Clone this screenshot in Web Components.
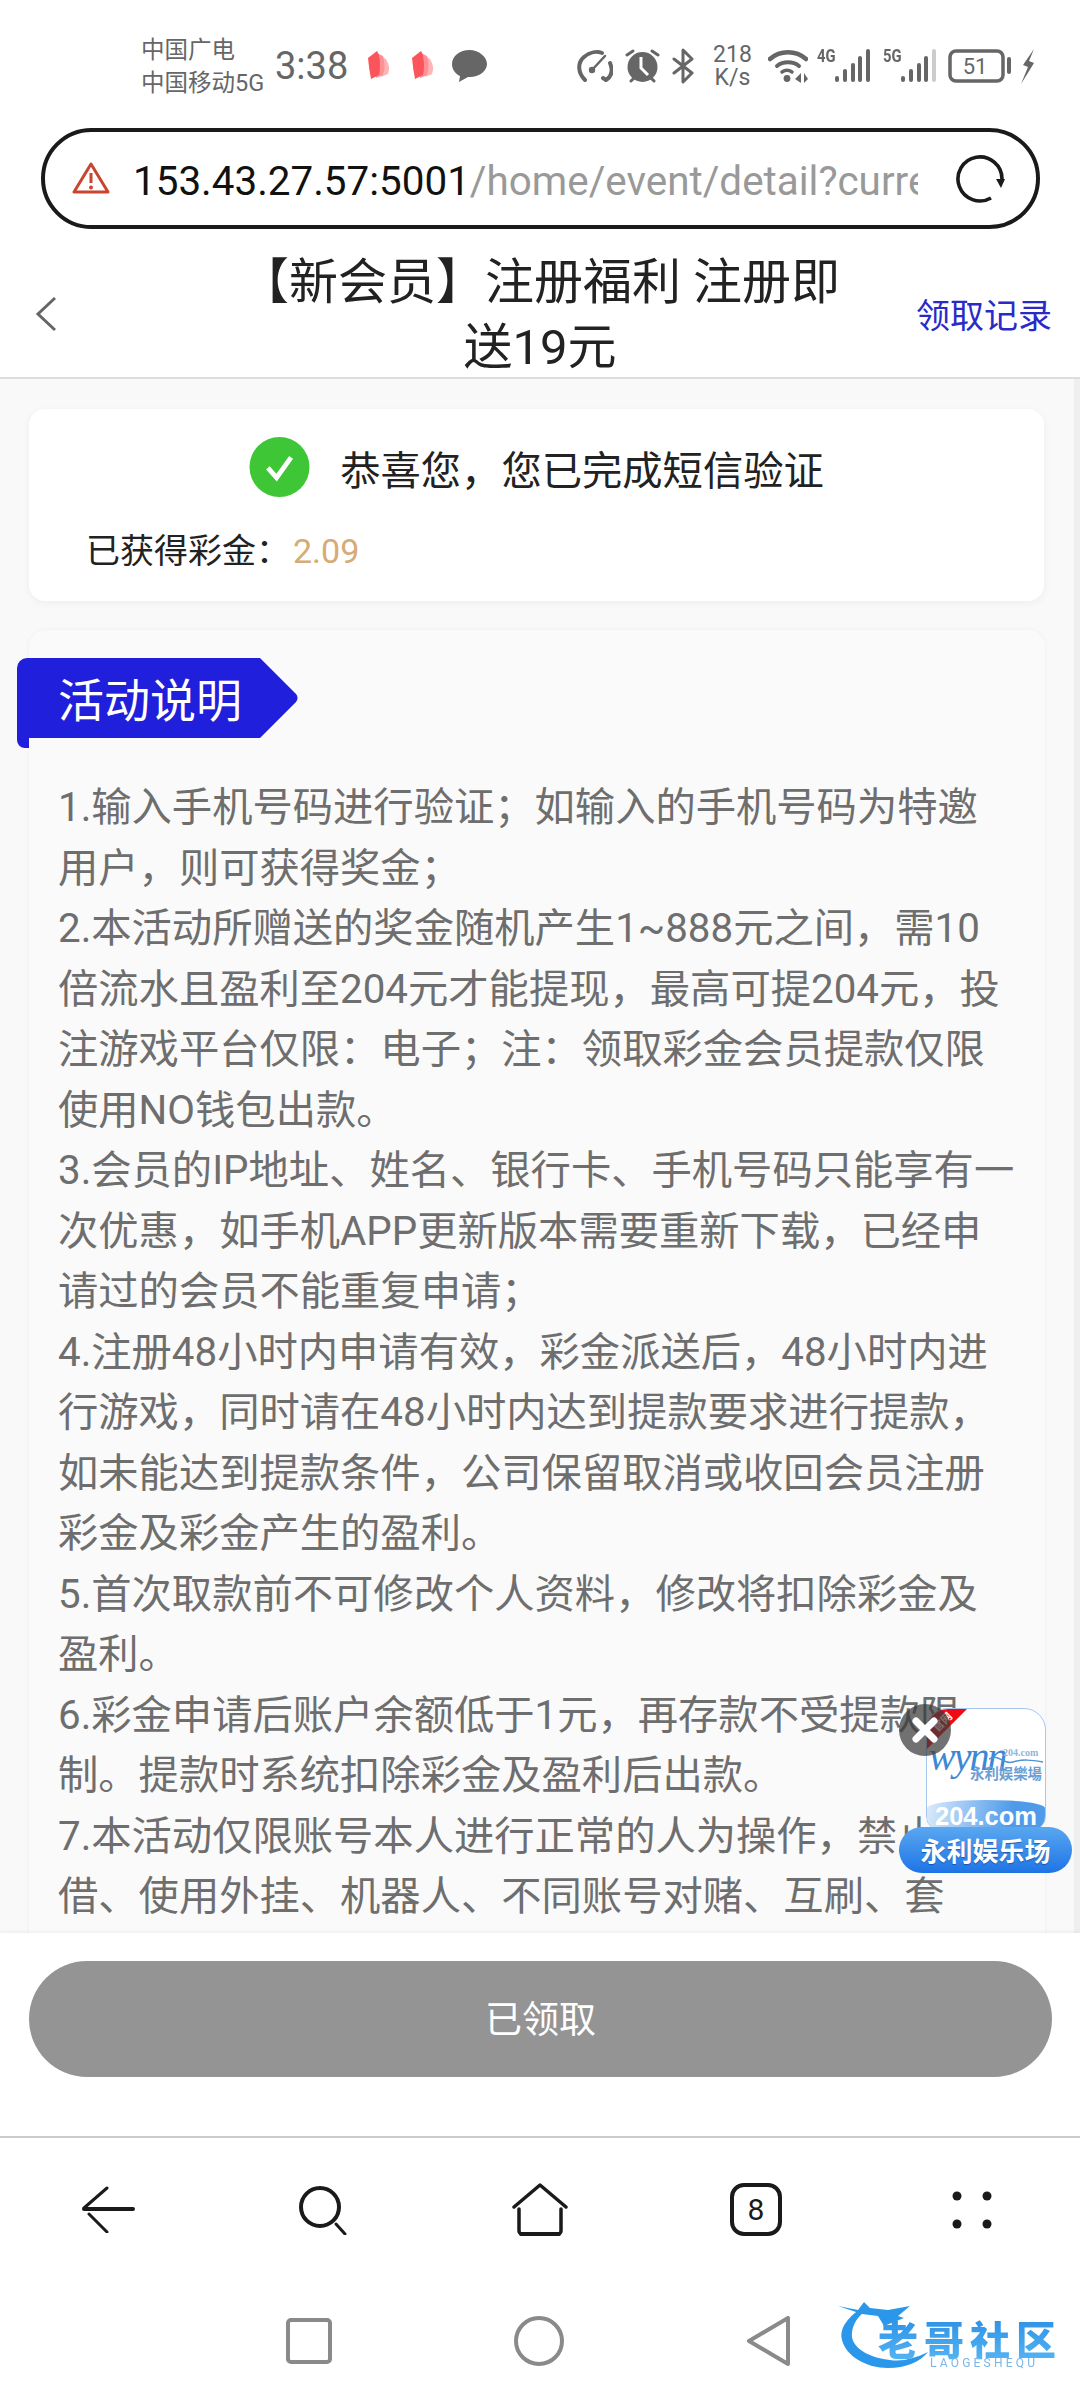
<!DOCTYPE html>
<html><head><meta charset="utf-8">
<style>
html,body{margin:0;padding:0;background:#fff;}
body{width:1080px;height:2400px;overflow:hidden;font-family:"Roboto","Noto Sans CJK SC",sans-serif;display:flex;flex-direction:column;position:relative;}
</style></head><body>
<status-bar></status-bar>
<url-bar></url-bar>
<page-header></page-header>
<page-content>
  <result-card></result-card>
  <event-info>
    <p>1.输入手机号码进行验证；如输入的手机号码为特邀用户，则可获得奖金；</p>
    <p>2.本活动所赠送的奖金随机产生1~888元之间，需10倍流水且盈利至204元才能提现，最高可提204元，投注游戏平台仅限：电子；注：领取彩金会员提款仅限使用NO钱包出款。</p>
    <p>3.会员的IP地址、姓名、银行卡、手机号码只能享有一次优惠，如手机APP更新版本需要重新下载，已经申请过的会员不能重复申请；</p>
    <p>4.注册48小时内申请有效，彩金派送后，48小时内进行游戏，同时请在48小时内达到提款要求进行提款，如未能达到提款条件，公司保留取消或收回会员注册彩金及彩金产生的盈利。</p>
    <p>5.首次取款前不可修改个人资料，修改将扣除彩金及盈利。</p>
    <p>6.彩金申请后账户余额低于1元，再存款不受提款限制。提款时系统扣除彩金及盈利后出款。</p>
    <p>7.本活动仅限账号本人进行正常的人为操作，禁止出借、使用外挂、机器人、不同账号对赌、互刷、套</p>
  </event-info>
</page-content>
<claim-bar></claim-bar>
<browser-nav></browser-nav>
<system-nav></system-nav>
<float-ad></float-ad>
<script>
function def(name,html,extra){customElements.define(name,class extends HTMLElement{constructor(){super();this.attachShadow({mode:"open"}).innerHTML=html;}connectedCallback(){if(extra)extra.call(this,this.shadowRoot);}});}
const G="#666";
const petal=`<path d="M13 5l5 3q5 8 2 15l-7 3z" fill="#ffb4b8"/><path d="M9 2l6 3q3 10 0 19l-7 3z" fill="#ff9096"/><path d="M0 7l9-7 2 4q2 12 0 20l-8 4Q1 18 0 7z" fill="#fb555b"/>`;
def("sig-bars",`<style>
:host{display:block;position:relative;width:53px;height:34px;color:#666;flex:none}
b{position:absolute;left:0;top:-4px;font:700 19px/22px "Roboto",sans-serif;transform:scaleX(.78);transform-origin:0 0;}
svg{position:absolute;left:0;top:0;display:block}
</style><b></b><svg width="53" height="34" viewBox="0 0 53 34" stroke="#666" stroke-width="4" stroke-linecap="round"><path d="M20 29v2"/><path d="M28 22v9"/><path d="M36 16v15"/><path d="M43 9v22"/><path class="l" d="M51 2v29"/></svg>`,function(s){s.querySelector("b").textContent=this.getAttribute("label");if(this.hasAttribute("dim"))s.querySelector(".l").setAttribute("stroke","#ccc");});
def("status-bar",`<style>
:host{display:flex;height:122px;flex:none;align-items:center;padding:10px 46px 0 141px;box-sizing:border-box;color:${G};font-family:"Roboto","Noto Sans CJK SC",sans-serif;}
.c{font-size:23.5px;line-height:33px;width:134px;white-space:nowrap;flex:none;padding-top:2px}
.t{font-size:38px;width:93px;flex:none}
svg{display:block;flex:none}
.sp{flex:1}
.k{font-size:23px;line-height:23px;text-align:center;width:39px;flex:none;margin:0 16px 0 19px;}
</style>
<div class="c">中国广电<br>中国移动5G</div><div class="t">3:38</div>
<svg width="23" height="30" viewBox="0 0 23 30">${petal}</svg>
<svg width="23" height="30" viewBox="0 0 23 30" style="margin-left:21px">${petal}</svg>
<svg width="35" height="32" viewBox="0 0 35 32" style="margin-left:17px"><path d="M17.5 0C8 0 0 6 0 14c0 6 4 10 8 12l-1 6 9-5h2c9 0 17-6 17-13S27 0 17.5 0z" fill="#666"/></svg>
<div class="sp"></div>
<svg width="36" height="32" viewBox="0 0 36 32" fill="none" stroke="#666" stroke-width="4" stroke-linecap="round" stroke-linejoin="round"><path d="M8 30C1 23 0 13 7 7c6-5 13-6 18-4"/><path d="M33 13c3 7 2 13-4 17l-3-2"/><path d="M15 20L28 6" stroke-width="2.5"/><circle cx="15" cy="20" r="3.2" fill="#666" stroke="none"/></svg>
<svg width="35" height="34" viewBox="0 0 35 34" style="margin-left:12px"><circle cx="17.5" cy="18" r="15" fill="#666"/><path d="M2 6l6-4M33 6l-6-4M6 32l3-3M29 32l-3-3" stroke="#666" stroke-width="3" stroke-linecap="round"/><path d="M16 8v11l7 7" stroke="#fff" stroke-width="3" fill="none"/></svg>
<svg width="22" height="36" viewBox="0 0 22 36" fill="none" stroke="#666" stroke-width="3" stroke-linejoin="round" stroke-linecap="round" style="margin-left:12px"><path d="M2 11l18 14-9 9V2l9 9L2 25"/></svg>
<div class="k">218<br>K/s</div>
<svg width="40" height="34" viewBox="0 0 40 34" fill="none" stroke="#666" stroke-linecap="round"><path d="M2 10c10-9 26-9 36 0" stroke-width="4.5"/><path d="M9 17c6-5 16-5 22 0" stroke-width="4"/><path d="M14 23c3-2 7-2 10 0" stroke-width="3.5"/><circle cx="19" cy="29.5" r="3.4" fill="#666" stroke="none"/><path d="M27 30l6-6v10zM36 24v10l4-4z" fill="#666" stroke="none"/></svg>
<sig-bars label="4G" style="margin-left:9px"></sig-bars>
<sig-bars label="5G" dim style="margin-left:13px;width:52px"></sig-bars>
<svg width="63" height="34" viewBox="0 0 63 34" style="margin-left:13px"><rect x="2" y="2" width="53" height="30" rx="6" fill="none" stroke="#666" stroke-width="3.5"/><text x="27" y="25" font-size="22" text-anchor="middle" fill="#666" font-family="Roboto">51</text><rect x="59" y="8" width="4" height="17" rx="2" fill="#666"/></svg>
<svg width="13" height="35" viewBox="0 0 13 35" style="margin-left:10px"><path d="M13 0L2 16l5 2-7 17L13 14 8 12z" fill="#666"/></svg>`);
def("url-bar",`<style>
:host{display:block;flex:none;height:128px;padding:6px 40px 0 41px;box-sizing:border-box;width:1080px;}
.b{height:101px;border:4.5px solid #1a1a1a;border-radius:52px;display:flex;align-items:center;box-sizing:border-box;padding:0 31px 0 27px;background:#fff;}
.u{font-size:40.4px;color:#111;width:785px;overflow:hidden;white-space:nowrap;margin:5px 0 0 23px;font-family:"Roboto",sans-serif;flex:none}
.u span{color:#999}
svg{flex:none;display:block}
.sp{flex:1}
</style><div class="b">
<svg width="38" height="34" viewBox="0 0 38 34" fill="none" style="margin-top:-2px"><path d="M19 3L2 31h34z" stroke="#c8452f" stroke-width="3" stroke-linejoin="round"/><path d="M19 12v10" stroke="#c8452f" stroke-width="3"/><circle cx="19" cy="26.5" r="2" fill="#c8452f"/></svg>
<div class="u">153.43.27.57:5001<span>/home/event/detail?curre</span></div>
<div class="sp"></div>
<svg width="50" height="50" viewBox="0 0 50 50" fill="none" stroke="#1a1a1a" stroke-width="3.6"><path d="M36 44A22 22 0 1 1 47 25"/><path d="M41 25h9l-4 9z" fill="#1a1a1a" stroke="none"/></svg>
</div>`);
def("page-header",`<style>
:host{display:flex;flex:none;align-items:center;height:129px;box-sizing:border-box;border-bottom:2px solid #ddd;color:#222;background:#fff;}
.back{width:225px;flex:none;padding-left:35px;box-sizing:border-box;}
.t{width:630px;flex:none;text-align:center;font-size:49px;line-height:65px;margin-top:3px;color:#222;font-family:"Roboto","Noto Sans CJK SC",sans-serif;}
.r{flex:1;font-size:34px;color:#2a2ac8;text-align:right;padding-right:28px;white-space:nowrap;font-family:"Noto Sans CJK SC",sans-serif;}
svg{display:block}
</style>
<div class="back"><svg width="22" height="36" viewBox="0 0 22 36" fill="none" stroke="#666" stroke-width="3"><path d="M20 2L3 18l17 16"/></svg></div>
<div class="t">【新会员】注册福利 注册即送19元</div>
<div class="r">领取记录</div>`);
def("page-content",`<style>
:host{display:block;flex:none;height:1554px;background:linear-gradient(to left,#efefef 6px,#f9f9f9 6px);overflow:hidden;padding:30px 35px 0 29px;box-sizing:border-box;width:1080px;}
</style><slot></slot>`);
def("result-card",`<style>
:host{display:block;height:192px;width:1015px;background:#fff;border-radius:16px;box-shadow:0 2px 8px rgba(0,0,0,.05);box-sizing:border-box;padding-top:28px;font-family:"Noto Sans CJK SC",sans-serif;}
.h{display:flex;align-items:center;justify-content:center;font-size:40.3px;color:#222;height:60px;}
svg{display:block;margin-right:30px;flex:none}
.g{font-size:34px;color:#222;padding-left:57px;margin-top:31px;line-height:46px;font-family:"Roboto","Noto Sans CJK SC",sans-serif;}
.g span{color:#d6ab76;margin-left:3px;font-weight:400}
</style><div class="h"><svg width="61" height="60" viewBox="0 0 62 62"><circle cx="31" cy="31" r="31" fill="#3ec637"/><path d="M19 32l9 10 15-21" fill="none" stroke="#fff" stroke-width="5"/></svg>恭喜您，您已完成短信验证</div>
<div class="g">已获得彩金：<span>2.09</span></div>`);
def("event-info",`<style>
:host{display:block;margin-top:29px;height:1420px;width:1016px;background:#fafafa;border-radius:16px;box-shadow:0 0 4px rgba(0,0,0,.05);position:relative;padding:148px 28px 0 29px;box-sizing:border-box;font-family:"Noto Sans CJK SC",sans-serif;}
.tag{position:absolute;left:-12px;top:28px;font-size:46px;color:#fff;}
.tag svg{display:block}
.tag span{position:absolute;left:41px;top:7px;line-height:64px;white-space:nowrap}
::slotted(p){margin:0;font-size:40.3px;line-height:60.5px;color:#6e6e6e;font-family:"Roboto","Noto Sans CJK SC",sans-serif;}
</style><div class="tag"><svg width="281" height="90" viewBox="0 0 281 90"><path d="M10 0H243L279 36a6 6 0 0 1 0 8L243 80H12V90H8a8 8 0 0 1-8-8V10A10 10 0 0 1 10 0z" fill="#201fdb"/></svg><span>活动说明</span></div><slot></slot>`);
def("claim-bar",`<style>
:host{display:block;flex:none;width:1080px;height:205px;background:#fff;box-shadow:0 -2px 3px rgba(0,0,0,.04);box-sizing:border-box;padding-top:28px;border-bottom:2px solid #ccc;font-family:"Noto Sans CJK SC",sans-serif;position:relative;}
.b{margin:0 28px 0 29px;height:116px;border-radius:58px;background:#949494;color:#fff;font-size:37px;display:flex;align-items:center;justify-content:center;padding-bottom:5px;box-sizing:border-box;}
</style><div class="b">已领取</div>`);
def("num-tab",`<style>:host{display:flex;align-items:center;justify-content:center;width:52px;height:53px;box-sizing:border-box;border:4px solid #1a1a1a;border-radius:14px;font:30px/1 "Roboto",sans-serif;color:#1a1a1a;}</style>8`);
def("browser-nav",`<style>
:host{display:grid;flex:none;width:1080px;height:143px;grid-template-columns:repeat(5,216px);box-sizing:border-box;}
div{display:flex;align-items:center;justify-content:center;}
svg{display:block}
</style>
<div><svg width="53" height="47" viewBox="0 0 53 47" fill="none" stroke="#1a1a1a" stroke-linecap="round"><path d="M2 23h49" stroke-width="4"/><path d="M25 2L2 22M7 28l18 18" stroke-width="3"/></svg></div>
<div><svg width="50" height="50" viewBox="0 0 50 50" fill="none" stroke="#1a1a1a"><circle cx="21" cy="22" r="19" stroke-width="4"/><path d="M37 39l9 10" stroke-width="3" stroke-linecap="round"/></svg></div>
<div><svg width="56" height="53" viewBox="0 0 56 53" fill="none" stroke="#1a1a1a" stroke-width="3.5" stroke-linecap="round" stroke-linejoin="round"><path d="M2 24L28 2l26 22"/><path d="M7 26v22a3 3 0 0 0 3 3h36a3 3 0 0 0 3-3V26"/><path d="M9 51h38" stroke-width="4"/></svg></div>
<div><num-tab></num-tab></div>
<div><svg width="40" height="38" viewBox="0 0 40 38" fill="#1a1a1a"><circle cx="5" cy="5" r="4.5"/><circle cx="35" cy="5" r="4.5"/><circle cx="5" cy="33" r="4.5"/><circle cx="35" cy="33" r="4.5"/></svg></div>`);
def("system-nav",`<style>
:host{display:block;flex:none;position:relative;width:1080px;height:119px;}
.i{display:grid;grid-template-columns:repeat(3,230px);padding-left:194px;height:119px;align-items:center;justify-items:center;}
svg{display:block}
.logo{position:absolute;left:838px;top:21px;width:226px;height:72px;filter:blur(.6px);}
.logo b{position:absolute;left:40px;top:13px;font:900 40px/46px "Noto Sans CJK SC",sans-serif;letter-spacing:6px;white-space:nowrap;background:linear-gradient(#2a8fe6,#55b4f2);-webkit-background-clip:text;background-clip:text;color:transparent;}
.logo i{position:absolute;left:92px;top:54px;font:normal 12px/14px "Roboto",sans-serif;color:#7cb6e6;letter-spacing:3.2px;white-space:nowrap}
.logo svg{position:absolute;left:0;top:0}
</style>
<div class="i">
<svg width="46" height="46" viewBox="0 0 46 46" fill="none" stroke="#8a8a8a" stroke-width="4"><rect x="2" y="2" width="42" height="42" rx="3"/></svg>
<svg width="50" height="50" viewBox="0 0 50 50" fill="none" stroke="#8a8a8a" stroke-width="4"><circle cx="25" cy="25" r="23"/></svg>
<svg width="44" height="50" viewBox="0 0 44 50" fill="none" stroke="#8a8a8a" stroke-width="4" stroke-linejoin="round"><path d="M41 2v46L2 25z"/></svg>
</div>
<div class="logo"><svg width="96" height="72" viewBox="0 0 96 72"><path d="M24 6C8 16 1 28 4 38c4 16 24 28 46 28 18 0 32-6 40-16-12 6-26 10-38 8-18-2-36-10-38-23-1-9 4-19 12-25z" fill="#2a97ea"/><path d="M0 4l20 4 6-8 6 6 18 2 22-4-12 10 6 2-20 8-6-10-16-2z" fill="#2a97ea"/></svg><b>老哥社区</b><i>LAOGESHEQU</i></div>`);
def("float-ad",`<style>
:host{display:block;position:absolute;left:899px;top:1704px;width:174px;height:170px;font-family:"Noto Sans CJK SC",sans-serif;}
.card{position:absolute;left:27px;top:4px;width:120px;height:124px;border-radius:22px 22px 16px 16px;background:#fff;border:1.5px solid #a6c8ef;box-sizing:border-box;overflow:hidden;}
.tri{position:absolute;left:0;top:0;width:0;height:0;border-top:40px solid #f10a14;border-right:40px solid transparent;}
.off{position:absolute;left:4px;top:6px;font-size:11px;line-height:13px;color:#fff;transform:rotate(-45deg);font-weight:700;white-space:nowrap}
.name{position:absolute;left:43px;top:55px;font-size:14.4px;color:#6a9ed6;font-weight:700;white-space:nowrap;line-height:18px;}
.sm{position:absolute;left:76px;top:38px;font:700 10px/11px "Liberation Serif",serif;color:#8fb5dd;}
.wy{position:absolute;left:2px;top:22px;font:italic 40px/52px "Liberation Serif",serif;color:#3d88d4;letter-spacing:-2px}
.wave{position:absolute;left:62px;top:44px;display:block}
.dom{position:absolute;left:0;right:0;bottom:0;height:31px;border-radius:50% 50% 0 0/8px 8px 0 0;background:linear-gradient(100deg,#dcebfb,#4f9bea 70%);color:#fff;font:700 25.5px/32px "Liberation Sans",sans-serif;text-align:center;}
.pill{position:absolute;left:0;top:123px;width:173px;height:46px;border-radius:23px;background:linear-gradient(#5aa7f0,#1e74e6);color:#fff;font-size:26px;font-weight:700;line-height:46px;text-align:center;text-shadow:0 1px 1px rgba(0,40,120,.5);}
.x{position:absolute;left:0;top:0;width:52px;height:52px;border-radius:50%;background:rgba(60,60,60,.72);}
.x svg{display:block}
</style>
<div class="card"><div class="tri"></div><div class="off">官网</div><div class="wy">wynn</div><svg class="wave" width="56" height="12" viewBox="0 0 56 12" fill="none" stroke="#4f92d6" stroke-width="1.5"><path d="M0 6c10-6 14 6 24 3s18-2 30 0"/></svg><div class="sm">204.com</div><div class="name">永利娱樂場</div><div class="dom">204.com</div></div>
<div class="pill">永利娱乐场</div>
<div class="x"><svg width="52" height="52" viewBox="0 0 52 52" stroke="#fff" stroke-width="7" stroke-linecap="round"><path d="M17 17l18 18M35 17L17 35"/></svg></div>`);
</script>
</body></html>
